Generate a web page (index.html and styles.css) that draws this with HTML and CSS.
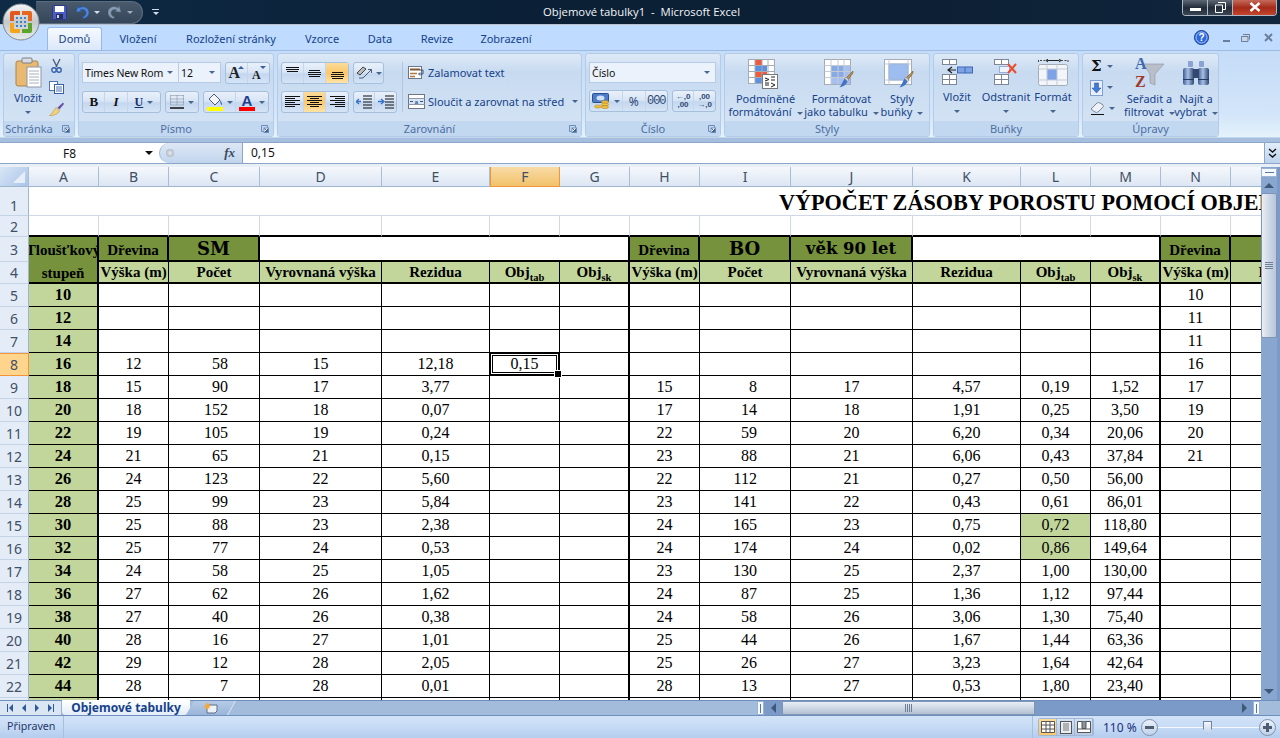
FILE: index.html
```html
<!DOCTYPE html>
<html lang="cs">
<head>
<meta charset="utf-8">
<title>Objemové tabulky1 - Microsoft Excel</title>
<link rel="stylesheet" href="styles.css">
</head>
<body>
<svg class="defs" width="0" height="0">
  <defs>
    <linearGradient id="steel" x1="0" y1="0" x2="1" y2="0"><stop offset="0" stop-color="#3c5c90"/><stop offset=".45" stop-color="#a9c0e4"/><stop offset="1" stop-color="#2c4674"/></linearGradient>
    <symbol id="a-top" viewBox="0 0 15 12"><path d="M1 .5h13M1 2.500h13M2 4.500h11" stroke="#111" fill="none"/></symbol>
    <symbol id="a-mid" viewBox="0 0 15 12"><path d="M2 3.500h11M1 5.500h13M1 7.500h13M2 9.500h11" stroke="#111" fill="none"/></symbol>
    <symbol id="a-bot" viewBox="0 0 15 12"><path d="M2 5.500h11M1 7.500h13M1 9.500h13M2 11.500h11" stroke="#111" fill="none"/></symbol>
    <symbol id="h-left" viewBox="0 0 15 12"><path d="M0 .5h15M0 2.500h10M0 4.500h15M0 6.500h10M0 8.500h15M0 10.500h10" stroke="#111" fill="none"/></symbol>
    <symbol id="h-center" viewBox="0 0 15 12"><path d="M0 .5h15M3 2.500h9M0 4.500h15M3 6.500h9M0 8.500h15M3 10.500h9" stroke="#111" fill="none"/></symbol>
    <symbol id="h-right" viewBox="0 0 15 12"><path d="M0 .5h15M5 2.500h10M0 4.500h15M5 6.500h10M0 8.500h15M5 10.500h10" stroke="#111" fill="none"/></symbol>
    <symbol id="launch" viewBox="0 0 8 8"><path d="M.5.5h6v2M.5.5v6h2" fill="none" stroke="#6d8cb5"/><rect x="3" y="3" width="4.500" height="4.500" fill="#fff" stroke="#6d8cb5"/><path d="M3.500 3.500l3 3M4 6.500h2.500V4" fill="none" stroke="#3c5f95"/></symbol>
    <symbol id="brush" viewBox="0 0 16 18"><path d="M15 1L8 8l2 2 5-7z" fill="#b98c52" stroke="#7a5a30" stroke-width=".6"/><path d="M8 7l3 3-1.500 1.500-3-3z" fill="#c9ced6" stroke="#7a8391" stroke-width=".5"/><path d="M6.500 8.500l3 3c-1 3-3.500 5-8 6 2-2.500 3-5.500 5-9z" fill="#4472c4"/></symbol>
  </defs>
</svg>

<div class="window">
  <header class="titlebar">
    <div class="qat">
      <svg class="ico" width="15" height="15" viewBox="0 0 15 15"><rect x=".5" y=".5" width="14" height="14" rx="1" fill="#4a5cc0" stroke="#2c3a86"/><rect x="3" y="1" width="9" height="6" fill="#fff"/><rect x="4" y="9" width="7" height="5" fill="#26305f"/><rect x="5" y="10" width="2" height="3" fill="#cfd6ef"/></svg>
      <svg class="ico" width="14" height="14" viewBox="0 0 14 14"><path d="M3 1L1 7l6-.500-2-1.500c3-1.500 6 0 6 3 0 2-1.500 3.500-3.500 4l1 1.500c3-.500 5.500-3 5.500-6C14 3 9 0 4 3z" fill="#4d86d8" stroke="#1f4f9e" stroke-width=".5"/></svg>
      <i class="caret light"></i>
      <svg class="ico faded" width="14" height="14" viewBox="0 0 14 14"><path d="M11 1l2 6-6-.500 2-1.500c-3-1.500-6 0-6 3 0 2 1.500 3.500 3.500 4l-1 1.500c-3-.500-5.500-3-5.500-6C0 3 5 0 10 3z" fill="#8fa6bd" stroke="#5e7388" stroke-width=".5"/></svg>
      <i class="caret faint"></i>
    </div>
    <div class="customize"><b></b><i class="caret light"></i></div>
    <h1 class="doc-title">Objemové tabulky1  -  Microsoft Excel</h1>
    <div class="winbtns">
      <span class="wb"><b class="wb-min"></b></span>
      <span class="wb"><svg width="11" height="11" viewBox="0 0 11 11"><path d="M3 .5h7.500v7H8M.5 3h7v7.500h-7z" fill="none" stroke="#fff"/></svg></span>
      <span class="wb close"><svg width="12" height="10" viewBox="0 0 12 10"><path d="M1.500 1l9 8M10.500 1l-9 8" stroke="#fff" stroke-width="2.400"/></svg></span>
    </div>
  </header>

  <svg class="orb" width="38" height="38" viewBox="0 0 38 38">
    <defs><linearGradient id="orbg" x1="0" y1="0" x2="0" y2="1"><stop offset="0" stop-color="#f4f5f6"/><stop offset=".5" stop-color="#c5c9cc"/><stop offset="1" stop-color="#e8ebea"/></linearGradient></defs>
    <circle cx="19" cy="19" r="18" fill="url(#orbg)" stroke="#7f8a93"/>
    <path d="M8 10a2 2 0 012-2h8v4h-6v6H8z" fill="#e2591b"/>
    <path d="M8 20h4v6h6v4h-8a2 2 0 01-2-2z" fill="#f3a51c"/>
    <path d="M20 8h8a2 2 0 012 2v8h-4v-6h-6z" fill="#e6671f"/>
    <path d="M26 20h4v8a2 2 0 01-2 2h-8v-4h6z" fill="#5aa52a"/>
    <g fill="#3a84c9"><rect x="14" y="14" width="2" height="2"/><rect x="18" y="14" width="2" height="2"/><rect x="22" y="14" width="2" height="2"/><rect x="14" y="18" width="2" height="2"/><rect x="18" y="18" width="2" height="2"/><rect x="22" y="18" width="2" height="2"/><rect x="14" y="22" width="2" height="2"/><rect x="18" y="22" width="2" height="2"/><rect x="22" y="22" width="2" height="2"/></g>
  </svg>

  <nav class="tabs">
    <span class="tab active">Domů</span>
    <span class="tab w-vl">Vložení</span>
    <span class="tab w-ro">Rozložení stránky</span>
    <span class="tab w-vz">Vzorce</span>
    <span class="tab w-da">Data</span>
    <span class="tab w-re">Revize</span>
    <span class="tab w-zo">Zobrazení</span>
    <div class="tabs-right">
      <svg width="15" height="15" viewBox="0 0 15 15"><circle cx="7.500" cy="7.500" r="7" fill="#2f68d8" stroke="#17409a"/><circle cx="7.500" cy="7.500" r="5.500" fill="none" stroke="#a9c6f7"/><text x="7.500" y="11.300" class="help-q">?</text></svg>
      <b class="m-min"></b>
      <svg width="9" height="8" viewBox="0 0 9 8"><path d="M2 .5h6.500v5M.5 2.500h6.500v5H.5z" fill="#c9d7e9" stroke="#6a7f99"/></svg>
      <svg width="9" height="9" viewBox="0 0 9 9"><path d="M1 1l7 7M8 1L1 8" stroke="#6a7f99" stroke-width="2"/></svg>
    </div>
  </nav>

  <section class="ribbon">
    <div class="group g-clip">
      <div class="body clip-body">
        <div class="big paste">
          <svg width="27" height="31" viewBox="0 0 27 31"><rect x="1" y="4" width="22" height="25" rx="2" fill="#e9b871" stroke="#a9864e"/><rect x="7" y="1" width="10" height="5" rx="1" fill="#d9dce0" stroke="#77808c"/><rect x="12" y="10" width="14" height="20" fill="#fff" stroke="#8e98a6"/><path d="M14 14h10M14 17h10M14 20h10M14 23h10M14 26h10" stroke="#a9b2be"/></svg>
          <span>Vložit</span><i class="caret"></i>
        </div>
        <div class="clip-tools">
          <svg width="11" height="15" viewBox="0 0 11 15"><path d="M2 1l4 8M9 1L5 9" stroke="#4a5a78" stroke-width="1.300"/><circle cx="3" cy="12" r="2.200" fill="#d5e0f4" stroke="#3560a8" stroke-width="1.400"/><circle cx="8" cy="12" r="2.200" fill="#d5e0f4" stroke="#3560a8" stroke-width="1.400"/></svg>
          <svg width="15" height="13" viewBox="0 0 15 13"><rect x=".5" y=".5" width="8" height="9" fill="#fff" stroke="#4f74b0"/><rect x="5.500" y="3.500" width="9" height="9" fill="#fff" stroke="#3560a8"/><path d="M7 6h6M7 8h6M7 10h6" stroke="#4f74b0"/></svg>
          <svg width="16" height="14" viewBox="0 0 16 14"><path d="M15 .5L9 6l2 2 5-6z" fill="#6a4fa8"/><path d="M9 5l3 3-1 1-3-3z" fill="#c9ced6"/><path d="M8 5.500l3.500 3.500C10 12 6 13.500 1 14c3-2 4.500-5 7-8.500z" fill="#f0d27a" stroke="#b08d34" stroke-width=".5"/></svg>
        </div>
      </div>
      <div class="label left">Schránka<svg class="launcher"><use href="#launch"/></svg></div>
    </div>

    <div class="group g-font">
      <div class="body stack">
        <div class="row">
          <div class="combo font-name"><span>Times New Rom</span><i class="caret"></i></div>
          <div class="combo font-size"><span>12</span><i class="caret"></i></div>
          <div class="btns grow">
            <span class="b"><span class="aa big-a">A</span><i class="up"></i></span>
            <span class="b"><span class="aa small-a">A</span><i class="down"></i></span>
          </div>
        </div>
        <div class="row">
          <div class="btns biu">
            <span class="b bold">B</span><span class="b ital">I</span><span class="b under"><u>U</u><i class="caret"></i></span>
          </div>
          <div class="btns border-b"><span class="b">
            <svg width="14" height="14" viewBox="0 0 14 14"><path d="M.5.5h13M.5 4h13M.5 7h13M.5 10h13M.5.5v10M7 .5v10M13.500.5v10" stroke="#7f8a99" stroke-dasharray="1 1" fill="none"/><path d="M0 13h14" stroke="#111" stroke-width="1.400"/></svg><i class="caret"></i></span></div>
          <div class="btns fills">
            <span class="b fill">
              <svg width="16" height="17" viewBox="0 0 16 17"><path d="M7 0l6 6-5 5-6-6z" fill="#f4f6fb" stroke="#4c5d7c"/><path d="M13 6c2 2 2 4 2 5-1 0-2-2-2-5z" fill="#3d6dc0"/><rect y="13" width="16" height="4" fill="#ff0"/></svg><i class="caret"></i></span>
            <span class="b color">
              <span class="col-a">A<b></b></span><i class="caret"></i></span>
          </div>
        </div>
      </div>
      <div class="label">Písmo<svg class="launcher"><use href="#launch"/></svg></div>
    </div>

    <div class="group g-align">
      <div class="body align-body">
        <div class="stack tight">
          <div class="row">
            <div class="btns three">
              <span class="b"><svg width="15" height="12"><use href="#a-top"/></svg></span>
              <span class="b"><svg width="15" height="12"><use href="#a-mid"/></svg></span>
              <span class="b on"><svg width="15" height="12"><use href="#a-bot"/></svg></span>
            </div>
            <div class="btns orient"><span class="b">
              <svg width="16" height="14" viewBox="0 0 16 14"><path d="M1 7l6-6 3 2-6 6z" fill="#bbb" stroke="#222" stroke-width=".8"/><path d="M3 12h4l8-8M12 3.500h3.500V7" stroke="#4a5a78" fill="none"/></svg><i class="caret"></i></span></div>
          </div>
          <div class="row">
            <div class="btns three">
              <span class="b"><svg width="15" height="12"><use href="#h-left"/></svg></span>
              <span class="b on"><svg width="15" height="12"><use href="#h-center"/></svg></span>
              <span class="b"><svg width="15" height="12"><use href="#h-right"/></svg></span>
            </div>
            <div class="btns indent">
              <span class="b"><svg width="16" height="14" viewBox="0 0 16 14"><path d="M7 1h9M7 4h9M7 7h9M7 10h9M7 13h9" stroke="#111"/><path d="M0 6.500h5M3 4L0 6.500 3 9" stroke="#3272c8" stroke-width="1.300" fill="none"/></svg></span>
              <span class="b"><svg width="16" height="14" viewBox="0 0 16 14"><path d="M7 1h9M7 4h9M7 7h9M7 10h9M7 13h9" stroke="#111"/><path d="M0 6.500h5M3 4l3 2.500L3 9" stroke="#3272c8" stroke-width="1.300" fill="none"/></svg></span>
            </div>
          </div>
        </div>
        <i class="vsep"></i>
        <div class="stack wrap-col">
          <div class="txtbtn"><svg width="17" height="15" viewBox="0 0 17 15"><rect x=".5" y="1.500" width="13" height="12" fill="#fff" stroke="#6c7687"/><path d="M2 4.500h10" stroke="#7c5a3a" stroke-width="2"/><path d="M2 8.500h7M2 11.500h5" stroke="#b07a3e" stroke-width="1.500"/><path d="M12 5h3v4h-4M12 7.500L10.500 9l1.500 1.500" stroke="#39527e" fill="none"/></svg>Zalamovat text</div>
          <div class="txtbtn"><svg width="17" height="15" viewBox="0 0 17 15"><rect x=".5" y=".5" width="16" height="14" fill="#fff" stroke="#6c7687"/><path d="M.5 4.500h16M.5 10.500h16" stroke="#8e98a6"/><rect x="1" y="5" width="15" height="5" fill="#d8e4f5"/><text x="8.500" y="9.700" class="tiny">a</text><path d="M2 7.500h3M15 7.500h-3" stroke="#33568f"/></svg>Sloučit a zarovnat na střed<i class="caret after"></i></div>
        </div>
      </div>
      <div class="label">Zarovnání<svg class="launcher"><use href="#launch"/></svg></div>
    </div>

    <div class="group g-num">
      <div class="body stack">
        <div class="combo num-f"><span>Číslo</span><i class="caret"></i></div>
        <div class="row">
          <div class="btns numfmt">
            <span class="b cur"><svg width="18" height="16" viewBox="0 0 18 16"><rect x=".5" y=".5" width="16" height="9" rx="1" fill="#4c7cc8" stroke="#26508f"/><ellipse cx="8.500" cy="5" rx="4" ry="2.500" fill="#cfe0f8"/><g fill="#f0c040" stroke="#a97c14" stroke-width=".5"><ellipse cx="13" cy="9" rx="3.500" ry="1.500"/><ellipse cx="13" cy="11.500" rx="3.500" ry="1.500"/><ellipse cx="13" cy="14" rx="3.500" ry="1.500"/><ellipse cx="6" cy="13.500" rx="3.500" ry="1.500"/></g></svg><i class="caret"></i></span>
            <span class="b pct">%</span>
            <span class="b th">000</span>
          </div>
          <div class="btns decs">
            <span class="b dec"><em>←,0</em><em>,00</em></span>
            <span class="b dec"><em>,00</em><em>→,0</em></span>
          </div>
        </div>
      </div>
      <div class="label">Číslo<svg class="launcher"><use href="#launch"/></svg></div>
    </div>

    <div class="group g-styles">
      <div class="body bigs">
        <div class="big s1">
          <svg width="30" height="30" viewBox="0 0 30 30"><g fill="#fff" stroke="#a5abb5"><rect x=".5" y=".5" width="26" height="24"/></g><rect x="7" y="1" width="7" height="5" fill="#ef5a3c"/><rect x="7" y="7" width="12" height="5" fill="#5f90e0"/><rect x="7" y="13" width="12" height="5" fill="#ef5a3c"/><rect x="7" y="19" width="7" height="5" fill="#5f90e0"/><path d="M7 .5v24M14 .5v24M20 .5v24M.5 6.500h26M.5 12.500h26M.5 18.500h26" stroke="#a5abb5"/><rect x="14.500" y="15.500" width="15" height="14" fill="#fff" stroke="#777"/><path d="M17 19l4 1.500-4 1.500M17 24h4M23 18h4M23 21h4M23 24l4 2-4 2M17 26h4" stroke="#222" fill="none"/></svg>
          <span>Podmíněné<br>formátování<i class="caret after"></i></span>
        </div>
        <div class="big s2">
          <svg width="30" height="30" viewBox="0 0 30 30"><rect x=".5" y=".5" width="26" height="25" fill="#fff" stroke="#a5abb5"/><rect x="7" y="7" width="19" height="18" fill="#a5c0ef"/><rect x="7" y="7" width="13" height="12" fill="#87aae6"/><path d="M7 .5v25M14 .5v25M20 .5v25M.5 6.500h26M.5 12.500h26M.5 18.500h26" stroke="#c5cbd5"/><use href="#brush" x="14" y="11" width="16" height="18"/></svg>
          <span>Formátovat<br>jako tabulku<i class="caret after"></i></span>
        </div>
        <div class="big s3">
          <svg width="30" height="30" viewBox="0 0 30 30"><rect x=".5" y=".5" width="27" height="25" fill="#fff" stroke="#a5abb5"/><rect x="5" y="5" width="19" height="16" fill="#9dbcf0" stroke="#5f90e0"/><path d="M.5 5h27M.5 21h27M5 .5v25M24 .5v25" stroke="#c5cbd5"/><use href="#brush" x="14" y="11" width="16" height="18"/></svg>
          <span>Styly<br>buňky<i class="caret after"></i></span>
        </div>
      </div>
      <div class="label">Styly</div>
    </div>

    <div class="group g-cells">
      <div class="body bigs">
        <div class="big c1">
          <svg width="31" height="28" viewBox="0 0 31 28"><g fill="#fff" stroke="#7d8797"><rect x=".5" y=".5" width="14" height="5"/><rect x=".5" y="15.500" width="14" height="10"/><path d="M7.500.5v5M7.500 15.500v10M.5 20.500h14"/></g><rect x="15.500" y="8" width="15" height="6" fill="#7ea2e6" stroke="#3e69b6"/><path d="M23 8v6" stroke="#3e69b6"/><path d="M14 11H7M10 8l-4 3 4 3" stroke="#222" fill="none" stroke-width="1.200"/></svg>
          <span>Vložit</span><i class="caret"></i>
        </div>
        <div class="big c2">
          <svg width="25" height="28" viewBox="0 0 25 28"><g fill="#fff" stroke="#7d8797"><rect x=".5" y=".5" width="14" height="5"/><rect x=".5" y="15.500" width="14" height="10"/><path d="M7.500.5v5M7.500 15.500v10M.5 20.500h14"/></g><rect x="5.500" y="7.500" width="10" height="6" fill="#eef3fc" stroke="#5079c2" stroke-dasharray="1 1"/><path d="M14 5l8 9M22 5l-8 9" stroke="#ef4a2a" stroke-width="2"/></svg>
          <span>Odstranit</span><i class="caret"></i>
        </div>
        <div class="big c3">
          <svg width="31" height="28" viewBox="0 0 31 28"><path d="M.5 3v-2M30 3V1" stroke="#444"/><path d="M2 1.500h27" stroke="#444" stroke-dasharray="2 1.500"/><path d="M10 1.500h11M21 0l2 1.500-2 1.500M10 0L8 1.500 10 3" stroke="#222" fill="none"/><rect x=".5" y="5.500" width="29" height="21" rx="2" fill="#f2f5fa" stroke="#a5abb5"/><rect x="9" y="10" width="10" height="11" fill="#7ea2e6"/><path d="M9 5.500v21M19 5.500v21M.5 10h29M.5 21h29" stroke="#c5cbd5"/></svg>
          <span>Formát</span><i class="caret"></i>
        </div>
      </div>
      <div class="label">Buňky</div>
    </div>

    <div class="group g-edit">
      <div class="body bigs edit-body">
        <div class="edit-tools">
          <div class="et"><span class="sigma">Σ</span><i class="caret"></i></div>
          <div class="et"><svg width="13" height="16" viewBox="0 0 13 16"><rect x=".5" y=".5" width="12" height="15" fill="#e8effa" stroke="#7fa0d0"/><path d="M4.500 3h4v5h2.500L6.500 13 2 8h2.500z" fill="#3f7ad6" stroke="#25509a" stroke-width=".5"/></svg><i class="caret"></i></div>
          <div class="et"><svg width="15" height="13" viewBox="0 0 15 13"><path d="M1 7l6-6c1-.500 2-.500 3 0l3 2c.500 1 .500 1.500 0 2l-5 5c-1 .500-2 .500-3 0z" fill="#eef2f8" stroke="#7b8696"/><path d="M1 12.500h13" stroke="#111"/></svg><i class="caret"></i></div>
        </div>
        <div class="big e1">
          <svg width="31" height="32" viewBox="0 0 31 32"><path d="M9 8h21L21 18v11l-5-2v-9z" fill="#b9bfc9" stroke="#8d95a2" stroke-width=".6"/><text x="1" y="13" class="az a">A</text><text x="1" y="31" class="az z">Z</text></svg>
          <span>Seřadit a<br>filtrovat<i class="caret after"></i></span>
        </div>
        <div class="big e2">
          <svg width="28" height="26" viewBox="0 0 28 26"><rect x="6" y="1" width="5" height="6" rx="1" fill="#8aa4cf"/><rect x="17" y="1" width="5" height="6" rx="1" fill="#8aa4cf"/><rect x="1" y="8" width="11" height="17" rx="2" fill="url(#steel)"/><rect x="16" y="8" width="11" height="17" rx="2" fill="url(#steel)"/><rect x="11" y="9" width="6" height="9" fill="#33486f"/><rect x="1" y="19" width="11" height="1" fill="#233b66"/><rect x="16" y="19" width="11" height="1" fill="#233b66"/></svg>
          <span>Najít a<br>vybrat<i class="caret after"></i></span>
        </div>
      </div>
      <div class="label">Úpravy</div>
    </div>
  </section>

  <div class="formula">
    <div class="namebox"><span>F8</span><svg class="name-caret" width="8" height="4" viewBox="0 0 8 4"><path d="M0 0h8L4 4z" fill="#111"/></svg></div>
    <div class="fx-pill"><i class="dot"></i><em>fx</em></div>
    <div class="fvalue">0,15</div>
    <div class="fexpand"><svg width="9" height="10" viewBox="0 0 9 10"><path d="M1 1l3.500 3L8 1M1 6l3.500 3L8 6" stroke="#111" stroke-width="1.400" fill="none"/></svg></div>
  </div>

  <div class="sheet-wrap">
    <div class="sheet">
      <table>
        <colgroup>
          <col class="c-h"><col class="c70"><col class="c70"><col class="c91"><col class="c122"><col class="c108"><col class="c70"><col class="c70"><col class="c70"><col class="c91"><col class="c122"><col class="c108"><col class="c70"><col class="c70"><col class="c70"><col class="c91">
        </colgroup>
        <thead>
          <tr class="heads"><th class="corner"><i></i></th><th>A</th><th>B</th><th>C</th><th>D</th><th>E</th><th class="sel">F</th><th>G</th><th>H</th><th>I</th><th>J</th><th>K</th><th>L</th><th>M</th><th>N</th><th>O</th></tr>
        </thead>
        <tbody>
          <tr class="r1"><th>1</th><td colspan="15" class="title"><div>VÝPOČET ZÁSOBY POROSTU POMOCÍ OBJEMOVÝCH TABULEK</div></td></tr>
          <tr class="r2"><th>2</th><td class="blank"></td><td></td><td></td><td></td><td></td><td></td><td></td><td></td><td></td><td></td><td></td><td></td><td></td><td></td><td></td></tr>
          <tr class="r3"><th>3</th>
            <td rowspan="2" class="dark ahead"><div><span>Tloušťkový</span><span>stupeň</span></div></td>
            <td class="dark h">Dřevina</td><td class="dark wide">SM</td><td colspan="4" class="white-t"></td>
            <td class="dark h">Dřevina</td><td class="dark wide">BO</td><td class="dark wide age">věk 90 let</td><td colspan="3" class="white-t"></td>
            <td class="dark h">Dřevina</td><td class="dark"></td></tr>
          <tr class="r4"><th>4</th>
            <td class="lite">Výška (m)</td><td class="lite">Počet</td><td class="lite">Vyrovnaná výška</td><td class="lite">Rezidua</td><td class="lite">Obj<sub>tab</sub></td><td class="lite">Obj<sub>sk</sub></td>
            <td class="lite">Výška (m)</td><td class="lite">Počet</td><td class="lite">Vyrovnaná výška</td><td class="lite">Rezidua</td><td class="lite">Obj<sub>tab</sub></td><td class="lite">Obj<sub>sk</sub></td>
            <td class="lite">Výška (m)</td><td class="lite">Počet</td></tr>
          <tr class="d"><th>5</th><td>10</td><td></td><td></td><td></td><td></td><td></td><td></td><td></td><td></td><td></td><td></td><td></td><td></td><td>10</td><td></td></tr>
          <tr class="d"><th>6</th><td>12</td><td></td><td></td><td></td><td></td><td></td><td></td><td></td><td></td><td></td><td></td><td></td><td></td><td>11</td><td></td></tr>
          <tr class="d"><th>7</th><td>14</td><td></td><td></td><td></td><td></td><td></td><td></td><td></td><td></td><td></td><td></td><td></td><td></td><td>11</td><td></td></tr>
          <tr class="d"><th class="sel">8</th><td>16</td><td>12</td><td>58</td><td>15</td><td>12,18</td><td class="active-cell">0,15</td><td></td><td></td><td></td><td></td><td></td><td></td><td></td><td>16</td><td></td></tr>
          <tr class="d"><th>9</th><td>18</td><td>15</td><td>90</td><td>17</td><td>3,77</td><td></td><td></td><td>15</td><td>8</td><td>17</td><td>4,57</td><td>0,19</td><td>1,52</td><td>17</td><td></td></tr>
          <tr class="d"><th>10</th><td>20</td><td>18</td><td>152</td><td>18</td><td>0,07</td><td></td><td></td><td>17</td><td>14</td><td>18</td><td>1,91</td><td>0,25</td><td>3,50</td><td>19</td><td></td></tr>
          <tr class="d"><th>11</th><td>22</td><td>19</td><td>105</td><td>19</td><td>0,24</td><td></td><td></td><td>22</td><td>59</td><td>20</td><td>6,20</td><td>0,34</td><td>20,06</td><td>20</td><td></td></tr>
          <tr class="d"><th>12</th><td>24</td><td>21</td><td>65</td><td>21</td><td>0,15</td><td></td><td></td><td>23</td><td>88</td><td>21</td><td>6,06</td><td>0,43</td><td>37,84</td><td>21</td><td></td></tr>
          <tr class="d"><th>13</th><td>26</td><td>24</td><td>123</td><td>22</td><td>5,60</td><td></td><td></td><td>22</td><td>112</td><td>21</td><td>0,27</td><td>0,50</td><td>56,00</td><td></td><td></td></tr>
          <tr class="d"><th>14</th><td>28</td><td>25</td><td>99</td><td>23</td><td>5,84</td><td></td><td></td><td>23</td><td>141</td><td>22</td><td>0,43</td><td>0,61</td><td>86,01</td><td></td><td></td></tr>
          <tr class="d"><th>15</th><td>30</td><td>25</td><td>88</td><td>23</td><td>2,38</td><td></td><td></td><td>24</td><td>165</td><td>23</td><td>0,75</td><td class="mark">0,72</td><td>118,80</td><td></td><td></td></tr>
          <tr class="d"><th>16</th><td>32</td><td>25</td><td>77</td><td>24</td><td>0,53</td><td></td><td></td><td>24</td><td>174</td><td>24</td><td>0,02</td><td class="mark">0,86</td><td>149,64</td><td></td><td></td></tr>
          <tr class="d"><th>17</th><td>34</td><td>24</td><td>58</td><td>25</td><td>1,05</td><td></td><td></td><td>23</td><td>130</td><td>25</td><td>2,37</td><td>1,00</td><td>130,00</td><td></td><td></td></tr>
          <tr class="d"><th>18</th><td>36</td><td>27</td><td>62</td><td>26</td><td>1,62</td><td></td><td></td><td>24</td><td>87</td><td>25</td><td>1,36</td><td>1,12</td><td>97,44</td><td></td><td></td></tr>
          <tr class="d"><th>19</th><td>38</td><td>27</td><td>40</td><td>26</td><td>0,38</td><td></td><td></td><td>24</td><td>58</td><td>26</td><td>3,06</td><td>1,30</td><td>75,40</td><td></td><td></td></tr>
          <tr class="d"><th>20</th><td>40</td><td>28</td><td>16</td><td>27</td><td>1,01</td><td></td><td></td><td>25</td><td>44</td><td>26</td><td>1,67</td><td>1,44</td><td>63,36</td><td></td><td></td></tr>
          <tr class="d"><th>21</th><td>42</td><td>29</td><td>12</td><td>28</td><td>2,05</td><td></td><td></td><td>25</td><td>26</td><td>27</td><td>3,23</td><td>1,64</td><td>42,64</td><td></td><td></td></tr>
          <tr class="d"><th>22</th><td>44</td><td>28</td><td>7</td><td>28</td><td>0,01</td><td></td><td></td><td>28</td><td>13</td><td>27</td><td>0,53</td><td>1,80</td><td>23,40</td><td></td><td></td></tr>
          <tr class="d"><th>23</th><td></td><td></td><td></td><td></td><td></td><td></td><td></td><td></td><td></td><td></td><td></td><td></td><td></td><td></td><td></td></tr>
        </tbody>
      </table>
    </div>
    <div class="vscroll">
      <div class="split"><b></b></div>
      <div class="arrow"><i class="tri-up"></i></div>
      <div class="vthumb"><b></b></div>
      <div class="vrest"></div>
      <div class="arrow"><i class="tri-down"></i></div>
    </div>
  </div>

  <div class="sheetbar">
    <div class="nav">
      <i class="n first"></i><i class="n prev"></i><i class="n next"></i><i class="n last"></i>
    </div>
    <div class="sheet-tab">Objemové tabulky</div>
    <div class="new-tab"><svg width="14" height="12" viewBox="0 0 14 12"><path d="M3 3h10v6l-2 2H3z" fill="#eef2f8" stroke="#5f6f86"/><path d="M3 0l1 2 2-1-1 2 2 1-2 1 1 2-2-1-1 2-1-2-2 1 1-2L0 4l2-1-1-2 2 1z" fill="#f2a93c"/></svg></div>
    <div class="bar-rest"></div>
    <div class="hsplit"><b></b></div>
    <div class="harrow"><i class="tri-left"></i></div>
    <div class="hthumb"><b></b></div>
    <div class="hrest"></div>
    <div class="harrow right"><i class="tri-right"></i></div>
    <div class="hsplit end"><b></b></div>
  </div>

  <footer class="status">
    <div class="ready">Připraven</div>
    <div class="status-right">
      <div class="views">
        <span class="v on"><svg width="14" height="12" viewBox="0 0 14 12"><path d="M.5.5h13v11H.5zM.5 4h13M.5 8h13M5 .5v11M9 .5v11" fill="#fff" stroke="#555"/></svg></span>
        <span class="v"><svg width="12" height="13" viewBox="0 0 12 13"><rect x=".5" y=".5" width="11" height="12" fill="#e8ecf3" stroke="#555"/><path d="M3 3h6M3 5h6M3 7h6M3 9h6" stroke="#777"/></svg></span>
        <span class="v"><svg width="14" height="12" viewBox="0 0 14 12"><path d="M.5.5h13v11H.5z" fill="#fff" stroke="#555"/><path d="M5 .5v7h4v-7" fill="#8a94a3" stroke="#555"/><path d="M.5 8h13" stroke="#555"/></svg></span>
      </div>
      <div class="zoomtxt">110 %</div>
      <div class="zoombtn"><b></b></div>
      <div class="slider"><i class="track"></i><i class="thumb"></i></div>
      <div class="zoombtn plus"><b></b><em></em></div>
    </div>
  </footer>
</div>
</body>
</html>
```

FILE: styles.css
```css
* { box-sizing: border-box; }
html, body { margin: 0; padding: 0; width: 1280px; height: 738px; overflow: hidden; }
body { font-family: "Noto Sans", "Liberation Sans", sans-serif; font-size: 11px; color: #15428b; }
.defs { position: absolute; }
.window { position: relative; display: flex; flex-direction: column; width: 1280px; height: 738px; overflow: hidden; background: #bfdbff; }
i, em { font-style: normal; display: block; }

/* Title bar */
.titlebar { display: flex; align-items: center; flex: 0 0 25px; height: 25px; background: linear-gradient(90deg, #0e2a45 0%, #0b2036 40%, #0c1f34 70%, #10263d 100%); border-bottom: 1px solid #b9c3cf; position: relative; }
.orb { position: absolute; left: 2px; top: 3px; z-index: 3; }
.qat { display: flex; align-items: center; height: 23px; margin-left: 36px; padding-left: 16px; width: 107px; background: linear-gradient(#4a5a6d, #35465a); border: 1px solid #5d6c7d; border-left: none; border-radius: 0 12px 12px 0; gap: 0; }
.qat .ico:nth-child(2) { margin-left: 8px; }
.qat .caret { margin: 0 8px 0 5px; }
.customize { margin-left: 9px; display: flex; flex-direction: column; align-items: center; gap: 2px; width: 7px; }
.customize b { display: block; width: 7px; height: 1px; background: #cfd8e4; }
.caret { display: inline-block; width: 0; height: 0; border: 3px solid transparent; border-top-color: #47668f; border-bottom: 0; flex: none; }
.caret.light { border-top-color: #d5dde8; }
.caret.faint { border-top-color: #9fadbd; }
.caret.after { margin-left: 5px; vertical-align: middle; }
.faded { opacity: .9; }
.doc-title { margin: 0; position: absolute; left: 543px; top: 4px; font: 400 11.300px/16px "Open Sans", sans-serif; color: #f1f4f7; white-space: pre; }
.winbtns { position: absolute; right: 3px; top: -1px; display: flex; height: 17px; border: 1px solid #aeb8c4; border-top: 0; border-radius: 0 0 4px 4px; overflow: hidden; }
.wb { width: 25px; display: flex; align-items: center; justify-content: center; background: linear-gradient(#66707d, #202a38 55%, #3b4654); border-right: 1px solid #aeb8c4; }
.wb.close { width: 43px; border-right: 0; background: linear-gradient(#c87264, #a42a18 55%, #c5452f); }
.wb-min { display: block; width: 11px; height: 3px; background: #fff; margin-top: 5px; }

/* Tabs */
.tabs { display: flex; flex: 0 0 25px; height: 25px; padding: 2px 0 0 47px; background: #bfdbff; position: relative; }
.tab { display: flex; align-items: center; justify-content: center; height: 23px; font-size: 11px; color: #15428b; padding-bottom: 1px; }
.tab.active { width: 55px; background: linear-gradient(#f6faff, #dbe8f9); border: 1px solid #9ab9e0; border-bottom: 0; border-radius: 3px 3px 0 0; }
.w-vl { width: 72px; }
.w-ro { width: 114px; }
.w-vz { width: 68px; }
.w-da { width: 48px; }
.w-re { width: 66px; }
.w-zo { width: 72px; }
.tabs-right { position: absolute; right: 7px; top: 5px; display: flex; align-items: center; gap: 0; height: 15px; }
.tabs-right svg:nth-child(1) { margin-right: 14px; }
.tabs-right svg:nth-child(3) { margin: 0 14px 0 11px; }
.m-min { display: block; width: 7px; height: 2px; background: #6a7f99; margin-top: 6px; }
.help-q { font: 700 10px "Liberation Sans", sans-serif; fill: #fff; text-anchor: middle; }

/* Ribbon */
.ribbon { display: flex; gap: 3px; flex: 0 0 92px; height: 92px; padding: 2px 3px 5px; background: linear-gradient(#c5dcf8, #d3e5f9 70%, #e3f2fb 94%, #a6bfde 96%); border-top: 1px solid #9dbbe2; }
.group { display: flex; flex-direction: column; flex: none; height: 84px; border: 1px solid #b3cbe6; border-radius: 3px; background: linear-gradient(#dde9f7, #d0e0f3 14%, #c7daf0 22%, #d6e5f5 100%); overflow: hidden; }
.g-clip { width: 72px; } .g-font { width: 196px; } .g-align { width: 305px; } .g-num { width: 136px; } .g-styles { width: 206px; } .g-cells { width: 146px; } .g-edit { width: 137px; }
.body { flex: 0 0 67px; height: 67px; }
.label { position: relative; flex: 1; display: flex; align-items: center; justify-content: center; background: #c2d8f1; color: #4e6f9f; font-size: 11px; line-height: 15px; }
.label.left { padding-right: 20px; }
.launcher { position: absolute; right: 4px; top: 4px; width: 8px; height: 8px; }

.stack { display: flex; flex-direction: column; gap: 7px; padding: 8px 3px 0; }
.stack.tight { padding: 0; }
.row { display: flex; gap: 4px; height: 22px; }
.combo { display: flex; align-items: center; height: 21px; background: #ebf2fb; border: 1px solid #b5cbe6; color: #111; font-size: 10.500px; padding-left: 2px; }
.combo span { flex: 1; white-space: nowrap; overflow: hidden; }
.combo .caret { margin-right: 5px; }
.font-name { width: 97px; letter-spacing: -.1px; }
.font-size { width: 42px; margin-left: -4px; border-left: 0; }
.num-f { width: 127px; height: 21px; }
.num-f span { color: #111; }

.btns { display: flex; height: 22px; border: 1px solid #a6bfdd; border-radius: 3px; background: linear-gradient(#e9f0fa, #d8e5f6 45%, #c4d7ef 55%, #d5e4f6); color: #111; }
.b { display: flex; align-items: center; justify-content: center; gap: 4px; height: 100%; border-right: 1px solid #c5d6ec; position: relative; }
.b:last-child { border-right: 0; }
.b.on { background: linear-gradient(#fbdc9a, #fbc76a 50%, #ffe3a6); }
.grow { width: 45px; }
.grow .b { width: 22px; }
.aa { font: 700 15px/16px "Liberation Serif", serif; color: #222; }
.big-a { font-size: 16px; margin-left: -4px; }
.small-a { font-size: 12px; margin-left: -4px; margin-top: 3px; }
.up, .down { position: absolute; right: 3px; top: 3px; width: 0; height: 0; border: 3px solid transparent; }
.up { border-bottom-color: #3a5f96; border-top: 0; }
.down { border-top-color: #3a5f96; border-bottom: 0; }
.biu { width: 79px; }
.bold { width: 23px; font: 700 13px "Liberation Serif", serif; }
.ital { width: 23px; font: italic 700 13px "Liberation Serif", serif; }
.under { width: 33px; font: 700 12px "Liberation Serif", serif; color: #15316b; }
.border-b { width: 34px; }
.border-b .b { width: 100%; }
.fills { width: 66px; }
.fill, .color { width: 33px; }
.col-a { display: flex; flex-direction: column; align-items: center; font: 700 15px/13px "Liberation Sans", sans-serif; color: #1f3f8f; }
.col-a b { display: block; width: 16px; height: 4px; background: #f00; }

.clip-body { display: flex; padding: 0 0 0 8px; }
.big { display: flex; flex-direction: column; align-items: center; flex: none; padding-top: 5px; font-size: 11px; line-height: 13px; color: #15428b; text-align: center; white-space: nowrap; }
.big svg { margin-bottom: 3px; flex: none; }
.big > span { display: block; min-height: 13px; }
.big > .caret { margin-top: 7px; }
.paste { width: 32px; padding-top: 3px; }
.paste svg { margin-bottom: 3px; margin-top: 0; }
.clip-tools { display: flex; flex-direction: column; align-items: center; gap: 8px; padding-top: 4px; width: 18px; margin-left: 3px; }
.align-body { display: flex; padding: 8px 0 0 3px; }
.three { width: 68px; }
.three .b { width: 23px; }
.orient { width: 31px; }
.orient .b { width: 100%; }
.indent { width: 44px; }
.indent .b { width: 22px; }
.vsep { width: 1px; height: 50px; background: #aec6e2; margin: 0 5px 0 5px; }
.wrap-col { padding: 0; gap: 8px; }
.txtbtn { display: flex; align-items: center; gap: 3px; height: 21px; font-size: 11px; white-space: nowrap; color: #15428b; }
.tiny { font: 700 6px "Liberation Sans", sans-serif; fill: #33568f; text-anchor: middle; }
.numfmt { width: 79px; }
.cur { width: 34px; }
.pct { width: 23px; font-size: 12px; color: #2e4a72; }
.th { width: 22px; font: 400 12px "Liberation Mono", monospace; letter-spacing: -1px; color: #2e4a72; }
.decs { width: 44px; }
.dec { width: 22px; flex-direction: column; gap: 0; font: 700 8px/8px "Liberation Sans", sans-serif; color: #2e4a72; }

.bigs { display: flex; }
.g-styles .bigs { padding-left: 4px; }
.s1 { width: 67px; margin-left: 3px; }
.s1 svg, .s2 svg, .s3 svg { margin-right: 6px; }
.s2 { width: 79px; margin-left: 3px; }
.s3 { width: 42px; }
.g-cells .bigs { padding-left: 6px; }
.c1 { width: 34px; }
.c2 { width: 48px; margin-left: 8px; }
.c3 { width: 38px; margin-left: 4px; }
.edit-tools { display: flex; flex-direction: column; gap: 4px; width: 30px; margin-left: 7px; padding-top: 4px; }
.et { display: flex; align-items: center; gap: 4px; height: 17px; color: #111; }
.sigma { font: 700 15px/15px "DejaVu Serif", serif; width: 13px; padding-left: 1px; }
.e1 { width: 47px; margin-left: 7px; padding-top: 2px; }
.e2 { width: 44px; margin-left: 1px; padding-top: 6px; }
.e1 svg { margin-bottom: 4px; }
.e2 svg { margin-bottom: 6px; }
.az { font: 700 16px "Liberation Serif", serif; }
.az.a { fill: #3c68b0; }
.az.z { fill: #a03a2a; }

/* Formula bar */
.formula { display: flex; flex: 0 0 22px; height: 22px; background: #fff; border-bottom: 1px solid #8ba6c9; border-top: 1px solid #8ba6c9; position: relative; }
.namebox { display: flex; align-items: center; width: 159px; color: #111; font-size: 12px; }
.namebox span { margin-left: 63px; flex: 1; }
.name-caret { margin-right: 6px; flex: none; }
.fx-pill { display: flex; align-items: center; justify-content: space-between; width: 84px; padding: 0 7px 0 6px; background: linear-gradient(#dde7f5, #c2d5ee); border-radius: 10px 0 0 10px; border: 1px solid #a3b9d6; border-right: 1px solid #8ba6c9; border-top: 0; border-bottom: 0; }
.dot { width: 8px; height: 8px; border-radius: 50%; background: radial-gradient(#e8ebef, #9aa6b5); }
.fx-pill em { font: italic 700 13px "Liberation Serif", serif; color: #3c4a5e; }
.fvalue { flex: 1; padding-left: 8px; line-height: 20px; color: #111; font-size: 12px; }
.fexpand { width: 16px; display: flex; align-items: center; justify-content: center; background: linear-gradient(#e3edf9, #bcd3ee); border-left: 1px solid #8ba6c9; }

/* Sheet */
.sheet-wrap { display: flex; flex: 1; min-height: 0; margin-top: 3px; background: #fff; box-shadow: 0 -3px 0 #e9eff7; }
.sheet { flex: 0 0 1261px; width: 1261px; overflow: hidden; background: #fff; }
table { table-layout: fixed; border-collapse: separate; border-spacing: 0; width: 1322px; font: 16px/20px "Liberation Serif", serif; color: #000; }
col.c-h { width: 29px; } col.c70 { width: 70px; } col.c91 { width: 91px; } col.c122 { width: 122px; } col.c108 { width: 108px; }
th, td { padding: 0; text-align: center; vertical-align: middle; overflow: hidden; white-space: nowrap; }
td { border-right: 1px solid #d0d7e5; border-bottom: 1px solid #d0d7e5; }
tbody th { background: #e4ecf7; border-right: 1px solid #9eb6ce; border-bottom: 1px solid #c5d3e6; font: 400 14px/18px "Noto Sans", sans-serif; color: #3f4f66; padding-top: 1px; }
thead th { height: 20px; background: linear-gradient(#f5f8fc, #dce6f3); border-right: 1px solid #a9bed6; border-bottom: 1px solid #9eb6ce; font: 400 14px/18px "Noto Sans", sans-serif; color: #3f4f66; }
thead th.corner { position: relative; background: linear-gradient(135deg, #d9e6f6, #a9c4e8); }
.corner i { position: absolute; right: 3px; bottom: 3px; width: 0; height: 0; border: 6px solid transparent; border-right-color: #e8eef7; border-bottom-color: #e8eef7; }
thead th.sel { background: linear-gradient(#f9dba6, #f1c26a); border-right-color: #f29536; border-bottom-color: #f29536; border-left: 1px solid #f29536; }
tbody th.sel { background: #ffd58d; border: 1px solid #f29536; border-left: 0; color: #3f4f66; }
.r1 { height: 29px; } .r2 { height: 21px; } .r3 { height: 25px; } .r4 { height: 22px; } .d { height: 23px; }
.r1 th { vertical-align: bottom; padding: 0; }
.title { text-align: left; }
.title div { padding-left: 750px; font: 700 22.200px/25px "Liberation Serif", serif; white-space: nowrap; padding-top: 3px; }
.r2 td { border-bottom: 2px solid #000; }
.r3 td { border-right: 2px solid #000; border-bottom: 2px solid #000; font-weight: 700; }
.r3 td.dark:last-child { border-right: 0; }
.dark { background: #76923c; }
.h { font-size: 15px; padding-top: 2px !important; }
.wide { font: 700 18px/20px "DejaVu Serif", serif; }
.wide.age { font-size: 16.500px; }
.ahead { font-size: 15px; }
.ahead div { display: flex; flex-direction: column; align-items: center; overflow: hidden; width: 68px; height: 45px; padding-top: 2px; }
.ahead span { display: block; line-height: 23px; flex: none; }
.r4 td { background: #c2d69b; border-right: 1px solid #000; border-bottom: 2px solid #000; font: 700 15px/20px "Liberation Serif", serif; }
td.ahead { border-right: 2px solid #000; border-bottom: 2px solid #000; }
sub { font-size: 10.500px; line-height: 0; vertical-align: -4px; }
.d td { border-right: 1px solid #000; border-bottom: 1px solid #000; }
.d td:nth-child(2) { background: #c2d69b; font-weight: 700; font-size: 16.500px; border-right: 2px solid #000; }
.d td:nth-child(8), .d td:nth-child(14) { border-right: 2px solid #000; }
.r4 td:nth-child(7), .r4 td:nth-child(13) { border-right: 2px solid #000; }
.d td:nth-child(4) { text-align: right; padding-right: 31px; }
.d td:nth-child(10) { text-align: right; padding-right: 33px; }
.mark { background: #c2d69b; }
.d td.active-cell { position: relative; overflow: visible; box-shadow: inset 0 0 0 1px #000, inset 0 0 0 2px #fff, inset 0 0 0 3px #000; }
.active-cell::after { content: ""; position: absolute; right: -3px; bottom: -3px; width: 6px; height: 6px; background: #000; border: 1px solid #fff; z-index: 2; }

/* Vertical scrollbar */
.vscroll { flex: 1; display: flex; flex-direction: column; align-items: stretch; background: #88a6d0; border-right: 3px solid #7b9ac7; }
.split { height: 9px; margin: 1px 0 0; background: #f5f8fc; border: 1px solid #9cb3d1; display: flex; align-items: center; justify-content: center; }
.split b { display: block; width: 9px; height: 1px; background: #5c7699; }
.arrow { height: 17px; display: flex; align-items: center; justify-content: center; flex: none; }
.tri-up, .tri-down { width: 0; height: 0; border: 5px solid transparent; }
.tri-up { border-bottom-color: #3f5878; border-top: 0; }
.tri-down { border-top-color: #3f5878; border-bottom: 0; }
.vthumb { height: 145px; margin-top: -1px; background: linear-gradient(90deg, #e9eef6, #ced8e6 50%, #b8c6da); border: 1px solid #7f95b6; border-radius: 2px; display: flex; align-items: center; justify-content: center; }
.vthumb b { display: block; width: 8px; height: 7px; background: repeating-linear-gradient(#6e7f96 0 1px, transparent 1px 2px); }
.vrest { flex: 1; }

/* Sheet bar */
.sheetbar { display: flex; align-items: stretch; flex: 0 0 16px; height: 16px; background: #a3bcdc; border-top: 1px solid #6f90bd; border-bottom: 1px solid #6f90bd; }
.nav { display: flex; align-items: center; justify-content: space-around; width: 62px; padding: 0 4px; background: #dbe6f5; border-right: 1px solid #9cb4d4; }
.n { position: relative; width: 0; height: 0; border: 4px solid transparent; }
.first, .prev { border-right-color: #2f5a97; border-left: 0; }
.next, .last { border-left-color: #2f5a97; border-right: 0; }
.first::before, .last::before { content: ""; position: absolute; top: -4px; width: 1px; height: 8px; background: #2f5a97; }
.first::before { left: -2px; }
.last::before { left: 1px; }
.sheet-tab { width: 128px; margin-top: -1px; display: flex; align-items: center; justify-content: center; background: linear-gradient(#fff, #e3edf9); font-size: 12px; font-weight: 700; color: #15428b; border-radius: 0 0 6px 4px; }
.new-tab { width: 42px; display: flex; align-items: center; justify-content: center; background: linear-gradient(#b6cbe7, #9ab5d9); margin-right: 0; border-right: 1px solid #dde8f6; transform: skewX(-30deg); }
.new-tab svg { transform: skewX(30deg); }
.bar-rest { flex: 0 0 525px; }
.hsplit { width: 7px; background: #f5f8fc; border: 1px solid #9cb3d1; display: flex; align-items: center; justify-content: center; }
.hsplit b { display: block; width: 1px; height: 9px; background: #5c7699; }
.hsplit.end { margin-right: 20px; }
.harrow { width: 18px; display: flex; align-items: center; justify-content: center; background: #7b9ac7; }
.tri-left, .tri-right { width: 0; height: 0; border: 5px solid transparent; }
.tri-left { border-right-color: #3f5878; border-left: 0; }
.tri-right { border-left-color: #3f5878; border-right: 0; }
.hthumb { width: 253px; background: linear-gradient(#e9eef6, #ced8e6 50%, #b3c0d2); border: 1px solid #7f95b6; display: flex; align-items: center; justify-content: center; }
.hthumb b { display: block; width: 7px; height: 8px; background: repeating-linear-gradient(90deg, #6e7f96 0 1px, transparent 1px 2px); }
.hrest { flex: 1; background: #7b9ac7; }

/* Status bar */
.status { display: flex; flex: 0 0 22px; height: 22px; background: linear-gradient(#d2e3f8, #c9ddf6 40%, #b4cdee); color: #15316b; }
.ready { width: 64px; padding-left: 7px; font-size: 10.700px; line-height: 21px; border-right: 1px solid #a8c0dd; color: #23376b; }
.status-right { margin-left: auto; width: 248px; display: flex; align-items: center; border-left: 1px solid #a8c0dd; padding-left: 5px; }
.views { display: flex; height: 18px; width: 56px; border: 1px solid #9fb8d8; border-radius: 2px; }
.v { flex: 1; display: flex; align-items: center; justify-content: center; background: linear-gradient(#d4e3f6, #b6cae4); border-right: 1px solid #9fb8d8; }
.v.on { background: linear-gradient(#fbdc9a, #fbc76a); }
.zoomtxt { margin-left: 9px; width: 38px; font-size: 12px; color: #1b2f7c; white-space: nowrap; }
.zoombtn { position: relative; flex: none; width: 17px; height: 17px; border-radius: 50%; background: linear-gradient(#eaf1fb, #bfd2ea); border: 1px solid #7e91ac; display: flex; align-items: center; justify-content: center; }
.zoombtn b { display: block; width: 9px; height: 3px; background: #4f5d72; }
.zoombtn em { position: absolute; left: 6px; top: 3px; width: 3px; height: 9px; background: #4f5d72; }
.slider { position: relative; flex: 0 0 101px; height: 17px; }
.track { position: absolute; left: 0; right: 0; top: 8px; height: 1px; background: #f4f8fd; }
.thumb { position: absolute; left: 45px; top: 2px; width: 9px; height: 13px; background: linear-gradient(#f4f7fb, #c4d2e4); border: 1px solid #6f84a3; clip-path: polygon(0 0, 100% 0, 100% 65%, 50% 100%, 0 65%); }
```
